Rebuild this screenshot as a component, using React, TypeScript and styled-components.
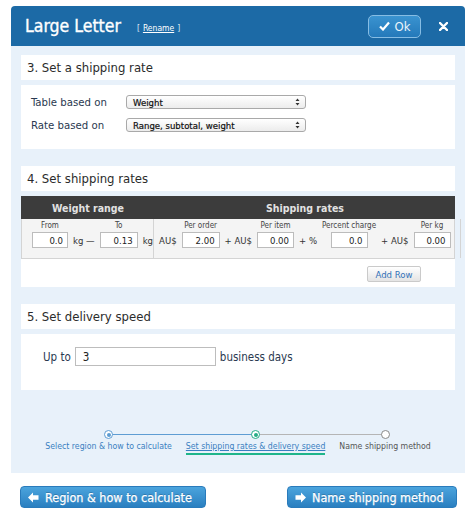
import React from 'react';
import styled, { createGlobalStyle } from 'styled-components';

const font = `"DejaVu Sans Condensed", "DejaVu Sans", Verdana, sans-serif`;

const GlobalStyle = createGlobalStyle`
  body {
    margin: 0;
    background: #fff;
    font-family: ${font};
    color: #333;
  }
  * {
    box-sizing: border-box;
  }
`;

const Page = styled.div`
  width: 474px;
  padding: 6px 9px 0 11px;
`;

const Dialog = styled.div`
  width: 454px;
`;

const Header = styled.header`
  height: 40px;
  background: #1c6aa6;
  border-radius: 4px 4px 0 0;
  display: flex;
  align-items: center;
  padding: 0 17px 0 14px;
`;

const Title = styled.h1`
  margin: 0;
  font-size: 17.5px;
  font-weight: normal;
  color: #fff;
  -webkit-text-stroke: 0.35px #fff;
`;

const Rename = styled.span`
  margin: 3px 0 0 16px;
  font-size: 8.5px;
  color: #dce9f5;
`;

const RenameLink = styled.a`
  color: #fff;
  text-decoration: underline;
  margin: 0 3px;
`;

const OkButton = styled.button`
  margin-left: auto;
  width: 53px;
  height: 23px;
  padding: 0;
  border: 1px solid #86bde4;
  border-radius: 5px;
  background: linear-gradient(#3a93d0, #2479ba);
  color: #eaf4fb;
  font-family: inherit;
  font-size: 13px;
  display: flex;
  align-items: center;
  justify-content: center;
  gap: 5px;
`;

const CloseButton = styled.button`
  margin-left: 18px;
  padding: 0;
  border: 0;
  background: none;
  width: 9px;
  height: 9px;
  display: flex;
`;

const Body = styled.div`
  height: 427px;
  background: #e8f1fa;
  padding: 9px 10px 0;
  display: flex;
  flex-direction: column;
`;

const Section = styled.section`
  display: flex;
  flex-direction: column;
  gap: 5px;

  & + & {
    margin-top: 17px;
  }
`;

const SectionTitle = styled.h2`
  margin: 0;
  height: 25px;
  padding: 0 6px;
  background: #fff;
  display: flex;
  align-items: center;
  font-size: 13px;
  font-weight: normal;
  color: #2b2b2b;
`;

const Panel = styled.div<{ $h: number; $pad: string }>`
  height: ${(p) => p.$h}px;
  padding: ${(p) => p.$pad};
  background: #fff;
  display: flex;
  flex-direction: column;
`;

const FormRow = styled.div`
  display: flex;
  align-items: center;
  height: 14px;

  & + & {
    margin-top: 9px;
  }
`;

const FormLabel = styled.span`
  width: 95px;
  font-size: 11.3px;
  color: #2a3950;
`;

const SelectBox = styled.div`
  width: 180px;
  height: 14px;
  padding: 0 5px 0 6px;
  border: 1px solid #a9a9a9;
  border-radius: 3px;
  background: linear-gradient(#ffffff, #ececec);
  display: flex;
  align-items: center;
  justify-content: space-between;
  font-size: 9.5px;
  color: #111;
  -webkit-text-stroke: 0.2px #111;
`;

const RateTable = styled.div`
  display: flex;
  flex-direction: column;
`;

const TableHead = styled.div`
  height: 23px;
  background: #3c3c3c;
  display: flex;
  align-items: center;
  color: #e2e2e2;
  font-size: 10.5px;
  font-weight: bold;
`;

const HeadCell = styled.div<{ $w?: number }>`
  ${(p) => (p.$w ? `width: ${p.$w}px;` : 'flex: 1;')}
  text-align: center;
`;

const TableRow = styled.div`
  height: 40px;
  display: flex;
  background: #f4f4f4;
  border: 1px solid #d4d4d4;
  border-top: 0;
`;

const BodyCell = styled.div<{ $w?: number; $spread?: boolean }>`
  ${(p) => (p.$w ? `width: ${p.$w}px;` : 'flex: 1;')}
  display: flex;
  align-items: flex-end;
  justify-content: ${(p) => (p.$spread ? 'space-between' : 'flex-start')};
  gap: 5px;
  padding: ${(p) => (p.$spread ? '0 9px 10px 5px' : '0 0 10px 10px')};
  border-right: 1px solid #d4d4d4;

  &:last-child {
    border-right: 0;
  }
`;

const Field = styled.div`
  display: flex;
  flex-direction: column;
  align-items: center;
  gap: 2px;
`;

const FieldLabel = styled.span`
  font-size: 8px;
  line-height: 9px;
  color: #444;
  white-space: nowrap;
`;

const RateInput = styled.input`
  width: 37px;
  height: 16px;
  padding: 0 4px;
  border: 1px solid #bcbcbc;
  background: #fff;
  font-family: inherit;
  font-size: 9.5px;
  color: #222;
  text-align: right;
`;

const Unit = styled.span`
  height: 16px;
  display: flex;
  align-items: center;
  font-size: 9.5px;
  color: #333;
  white-space: pre;
`;

const TableFooter = styled.div`
  display: flex;
  justify-content: flex-end;
  padding: 7px 34px 0 0;
`;

const AddRowButton = styled.button`
  width: 54px;
  height: 16px;
  padding: 0;
  border: 1px solid #cacaca;
  border-radius: 2px;
  background: linear-gradient(#ffffff, #e4e4e4);
  font-family: inherit;
  font-size: 9.5px;
  color: #3272b8;
`;

const SpeedRow = styled.div`
  display: flex;
  align-items: center;
  gap: 4px;
  font-size: 11.5px;
  color: #2a3950;
`;

const DaysInput = styled.input`
  width: 141px;
  height: 19px;
  padding: 0 7px;
  border: 1px solid #bdbdbd;
  font-family: inherit;
  font-size: 11.5px;
  color: #222;
`;

const Stepper = styled.ol`
  list-style: none;
  margin: 40px 0 0;
  padding: 0;
  display: flex;
  justify-content: center;
`;

const Step = styled.li<{ $in?: string; $out?: string }>`
  position: relative;
  padding: 0 7px;
  display: flex;
  flex-direction: column;
  align-items: center;

  &::before,
  &::after {
    content: '';
    position: absolute;
    top: 4px;
    height: 1px;
    width: 50%;
  }
  &::before {
    left: 0;
    background: ${(p) => p.$in ?? 'transparent'};
  }
  &::after {
    right: 0;
    background: ${(p) => p.$out ?? 'transparent'};
  }
`;

const Dot = styled.span<{ $ring: string; $fill?: string }>`
  position: relative;
  z-index: 1;
  width: 9px;
  height: 9px;
  border-radius: 50%;
  border: 1px solid ${(p) => p.$ring};
  background: #fff;
  display: flex;
  align-items: center;
  justify-content: center;

  &::after {
    content: '';
    width: 4px;
    height: 4px;
    border-radius: 50%;
    background: ${(p) => p.$fill ?? 'transparent'};
  }
`;

const StepLabel = styled.span<{ $state: 'done' | 'current' | 'next' }>`
  margin-top: 2px;
  padding-bottom: 1px;
  font-size: 8.7px;
  line-height: 11px;
  white-space: nowrap;
  color: ${(p) => (p.$state === 'next' ? '#555' : '#3a7fc1')};
  text-decoration: ${(p) => (p.$state === 'current' ? 'underline' : 'none')};
  border-bottom: 2px solid ${(p) => (p.$state === 'current' ? '#1fb58a' : 'transparent')};
`;

const Footer = styled.div`
  margin-top: 13px;
  padding: 0 8px 0 9px;
  display: flex;
  justify-content: space-between;
`;

const NavButton = styled.button<{ $w: number }>`
  width: ${(p) => p.$w}px;
  height: 22px;
  padding: 0 0 0 7px;
  border: 1px solid #2a7bbb;
  border-radius: 4px;
  background: linear-gradient(#4ba4dd, #2a7fc0);
  display: flex;
  align-items: center;
  gap: 6px;
  font-family: inherit;
  font-size: 12.5px;
  color: #fff;
  -webkit-text-stroke: 0.25px #fff;
  text-shadow: 0 -1px 0 rgba(0, 0, 0, 0.2);
`;

const Check = () => (
  <svg width="11" height="10" viewBox="0 0 11 10">
    <path d="M1 5.5 L4 8.5 L10 1.5" fill="none" stroke="#fff" strokeWidth="2.2" />
  </svg>
);

const Cross = () => (
  <svg width="9" height="9" viewBox="0 0 9 9">
    <path d="M1 1 L8 8 M8 1 L1 8" stroke="#fff" strokeWidth="2.4" strokeLinecap="round" />
  </svg>
);

const UpDown = () => (
  <svg width="5" height="8" viewBox="0 0 5 8">
    <path d="M2.5 0.5 L4.5 3 H0.5 Z M2.5 7.5 L4.5 5 H0.5 Z" fill="#333" />
  </svg>
);

const BlockArrow = ({ dir }: { dir: 'left' | 'right' }) => (
  <svg
    width="11"
    height="11"
    viewBox="0 0 11 11"
    style={dir === 'right' ? { transform: 'scaleX(-1)' } : undefined}
  >
    <path d="M0 5.5 L5 0.5 V3.3 H10.5 V7.7 H5 V10.5 Z" fill="#fff" />
  </svg>
);

const RateField = ({ label, value, w }: { label: string; value: string; w?: number }) => (
  <Field>
    <FieldLabel>{label}</FieldLabel>
    <RateInput readOnly value={value} style={w ? { width: w } : undefined} />
  </Field>
);

export default function App() {
  return (
    <>
      <GlobalStyle />
      <Page>
        <Dialog>
          <Header>
            <Title>Large Letter</Title>
            <Rename>
              [<RenameLink href="#">Rename</RenameLink>]
            </Rename>
            <OkButton>
              <Check />
              Ok
            </OkButton>
            <CloseButton aria-label="Close">
              <Cross />
            </CloseButton>
          </Header>

          <Body>
            <Section>
              <SectionTitle>3. Set a shipping rate</SectionTitle>
              <Panel $h={64} $pad="10px 0 0 10px">
                <FormRow>
                  <FormLabel>Table based on</FormLabel>
                  <SelectBox>
                    Weight
                    <UpDown />
                  </SelectBox>
                </FormRow>
                <FormRow>
                  <FormLabel>Rate based on</FormLabel>
                  <SelectBox>
                    Range, subtotal, weight
                    <UpDown />
                  </SelectBox>
                </FormRow>
              </Panel>
            </Section>

            <Section>
              <SectionTitle>4. Set shipping rates</SectionTitle>
              <Panel $h={91} $pad="0">
                <RateTable>
                  <TableHead>
                    <HeadCell $w={134}>Weight range</HeadCell>
                    <HeadCell>Shipping rates</HeadCell>
                  </TableHead>
                  <TableRow>
                    <BodyCell $w={133}>
                      <RateField label="From" value="0.0" w={36} />
                      <Unit>kg —</Unit>
                      <RateField label="To" value="0.13" w={38} />
                      <Unit>kg</Unit>
                    </BodyCell>
                    <BodyCell $spread>
                      <Unit>AU$</Unit>
                      <RateField label="Per order" value="2.00" w={38} />
                      <Unit>+ AU$</Unit>
                      <RateField label="Per item" value="0.00" />
                      <Unit>+ %</Unit>
                      <RateField label="Percent charge" value="0.0" />
                      <Unit>+ AU$</Unit>
                      <RateField label="Per kg" value="0.00" />
                    </BodyCell>
                    <BodyCell $w={9} />
                  </TableRow>
                </RateTable>
                <TableFooter>
                  <AddRowButton>Add Row</AddRowButton>
                </TableFooter>
              </Panel>
            </Section>

            <Section>
              <SectionTitle>5. Set delivery speed</SectionTitle>
              <Panel $h={56} $pad="13px 0 0 22px">
                <SpeedRow>
                  Up to
                  <DaysInput readOnly value="3" />
                  business days
                </SpeedRow>
              </Panel>
            </Section>

            <Stepper>
              <Step $out="#5e9dd3">
                <Dot $ring="#5e9dd3" $fill="#5e9dd3" />
                <StepLabel $state="done">Select region &amp; how to calculate</StepLabel>
              </Step>
              <Step $in="#5e9dd3" $out="#b5b5b5">
                <Dot $ring="#27ad86" $fill="#27ad86" />
                <StepLabel $state="current">Set shipping rates &amp; delivery speed</StepLabel>
              </Step>
              <Step $in="#b5b5b5">
                <Dot $ring="#8a8a8a" />
                <StepLabel $state="next">Name shipping method</StepLabel>
              </Step>
            </Stepper>
          </Body>

          <Footer>
            <NavButton $w={186}>
              <BlockArrow dir="left" />
              Region &amp; how to calculate
            </NavButton>
            <NavButton $w={170}>
              <BlockArrow dir="right" />
              Name shipping method
            </NavButton>
          </Footer>
        </Dialog>
      </Page>
    </>
  );
}
